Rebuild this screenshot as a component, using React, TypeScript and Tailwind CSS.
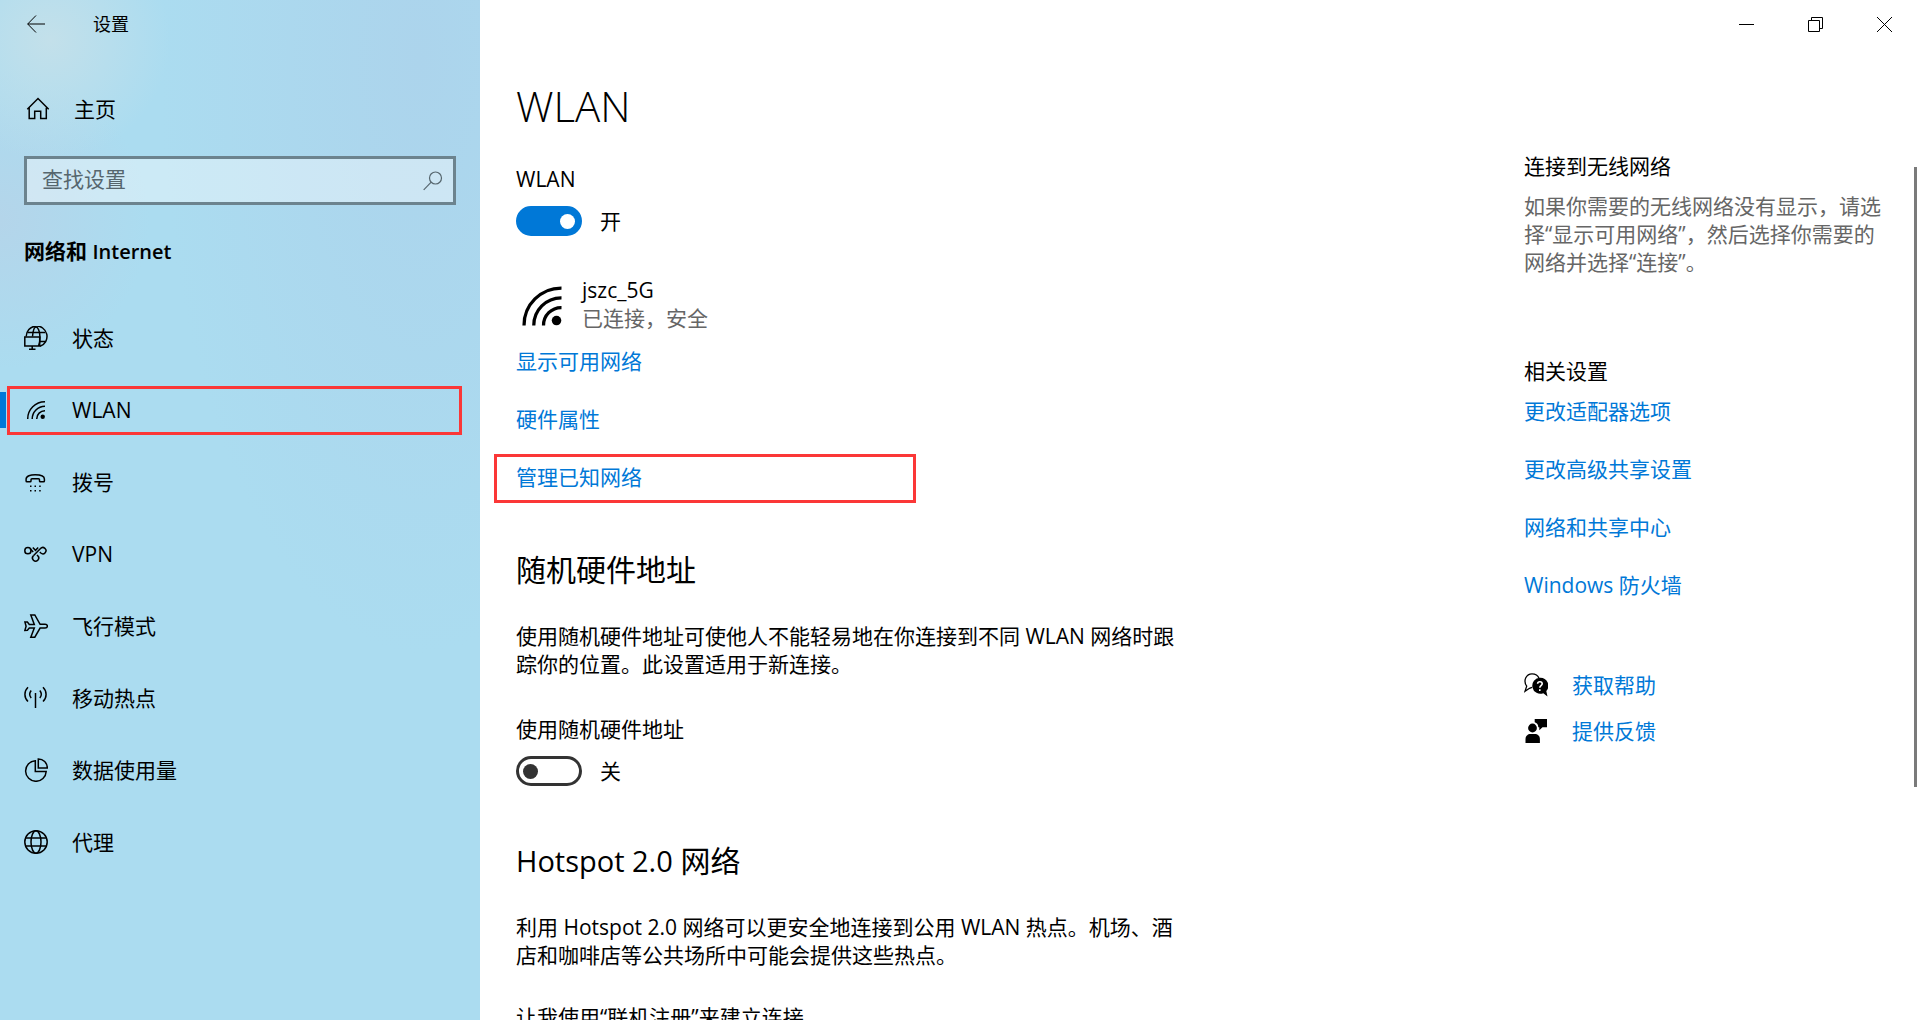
import { useState } from "react";
import type { ReactNode } from "react";

const iconProps = {
  width: 24,
  height: 24,
  viewBox: "0 0 24 24",
  fill: "none",
  stroke: "currentColor",
  strokeWidth: 1.5,
  "aria-hidden": true,
};

const StatusIcon = () => (
  <svg {...iconProps}>
    <path d="M2.200 10.500A10.400 10.400 0 1 1 16 20.300" />
    <path d="M8.500 10.500C9 5 10.300 1 12 1s4 4 4 10.500c0 3-.5 6-1.500 8.500" />
    <path d="M3.500 6.500h17.500M16 15.500h5.500" />
    <path d="M.8 11h14.900v9H.8zM8.200 20v3.200M5 23.200h6.500" />
  </svg>
);

const WlanIcon = ({ size = 24 }: { size?: number }) => (
  <svg {...iconProps} width={size} height={size}>
    <path d="M3.700 21A17.200 17.200 0 0 1 21 3.700" />
    <path d="M8.200 21A12.700 12.700 0 0 1 21 8.200" />
    <path d="M12.700 21A8.200 8.200 0 0 1 21 12.700" />
    <circle cx="18.700" cy="18.700" r="2.200" fill="currentColor" stroke="none" />
  </svg>
);

const DialIcon = () => (
  <svg {...iconProps}>
    <path d="M3 11.800h3.200c.5 0 .8-.3.800-.8V9.700c0-.6.400-1 1-1h6.500c.6 0 1 .4 1 1V11c0 .5.300.8.800.8h3.200c.6 0 .9-.3.9-.9V9c0-3-4.500-4.300-9.200-4.300S2.100 6 2.100 9v1.900c0 .6.300.9.900.9z" />
    <path d="M6 16.200h1.500M10.500 16.200H12M15.200 16.200h1.500M6 20.700h1.500M10.500 20.700H12M15.200 20.700h1.500" />
  </svg>
);

const VpnIcon = () => (
  <svg {...iconProps}>
    <circle cx="3.900" cy="8.700" r="3.100" />
    <path d="M6 6.400l3.200 3.600M8.800 5.500l2.700 2.800 2.700-2.800" />
    <path d="M9.400 13.800l7.100-7.200a3.100 3.100 0 1 1 .3 4.400l-1-1" />
    <path d="M9.400 13.800a3.100 3.100 0 1 0 4.400 0l-.8-.9" />
  </svg>
);

const PlaneIcon = () => (
  <svg {...iconProps}>
    <path d="M.9 8l2.500.1 1.900 2.300h5L6.800.9h4l5.300 9.400h5c3 0 3 3.800 0 3.800h-5l-5.300 9.100h-4l3.500-9.100h-5l-1.900 2.200-2.500.1 1.200-4.200z" />
  </svg>
);

const HotspotIcon = () => (
  <svg {...iconProps}>
    <path d="M11.500 7v15" />
    <path d="M7.200 4.500c-1.900 2.300-1.900 5.200 0 7.500M15.800 4.500c1.900 2.300 1.900 5.200 0 7.500" />
    <path d="M4 1.300C-.1 5.300-.1 11.500 4 15.500M19 1.300c4.100 4 4.100 10.200 0 14.200" />
  </svg>
);

const DataIcon = () => (
  <svg {...iconProps}>
    <path d="M11.300 2.700a10.300 10.300 0 1 0 10.900 10.800H11.300z" />
    <path d="M14.300.9v9h9A9 9 0 0 0 14.300.9z" />
  </svg>
);

const GlobeIcon = () => (
  <svg {...iconProps}>
    <circle cx="12" cy="12" r="11.200" />
    <ellipse cx="12" cy="12" rx="5" ry="11.200" />
    <path d="M2 8h20M2 16h20" />
  </svg>
);

const HelpIcon = () => (
  <svg {...iconProps}>
    <path d="M8 14.300l-2.500 1-4.500 3 1.700-5.200C-1.300 7.300 2.500.9 8 .9c3.700 0 6 1.700 7 4.300" strokeWidth="1.300" />
    <path
      d="M16 4.800a8 8 0 1 0 3.300 15.400l4.200 3.300-1.200-5.400A8 8 0 0 0 16 4.800z"
      fill="currentColor"
      stroke="none"
    />
    <path d="M13.600 10.700c.2-2.700 4.600-2.500 4.600.1 0 1.900-2.400 1.900-2.400 3.900M15.800 16.200v1.700" stroke="#fff" strokeWidth="1.600" />
  </svg>
);

const FeedbackIcon = () => (
  <svg {...iconProps} fill="currentColor" stroke="none">
    <circle cx="8.500" cy="9" r="4.400" />
    <path d="M1.500 24v-4c0-3 2.300-5 5-5h4.200c3 0 5.200 2 5.200 5v4z" />
    <path d="M10.700 0H23v8.200h-4.500l-3.200 3V8.200h-1c0-2.600-1.300-4.300-3.600-5z" />
  </svg>
);

const navItems = [
  { label: "状态", icon: <StatusIcon /> },
  { label: "WLAN", icon: <WlanIcon />, active: true },
  { label: "拨号", icon: <DialIcon /> },
  { label: "VPN", icon: <VpnIcon /> },
  { label: "飞行模式", icon: <PlaneIcon /> },
  { label: "移动热点", icon: <HotspotIcon /> },
  { label: "数据使用量", icon: <DataIcon /> },
  { label: "代理", icon: <GlobeIcon /> },
];

const relatedLinks = ["更改适配器选项", "更改高级共享设置", "网络和共享中心", "Windows 防火墙"];

function TextLink({ children }: { children: ReactNode }) {
  return (
    <a href="#" className="block w-fit text-[#0078d7] hover:text-[#666]">
      {children}
    </a>
  );
}

function Toggle({ id, label, initial }: { id: string; label: string; initial: boolean }) {
  const [on, setOn] = useState(initial);

  return (
    <div>
      <label htmlFor={id} className="block">
        {label}
      </label>
      <div className="mt-[13px] flex h-[30px] items-center gap-[18px]">
        <input
          id={id}
          type="checkbox"
          role="switch"
          checked={on}
          onChange={(e) => setOn(e.target.checked)}
          className="flex h-[30px] w-[66px] appearance-none items-center rounded-full border-3 border-[#333] px-1 before:size-[15px] before:rounded-full before:bg-[#333] before:content-[''] checked:justify-end checked:border-[#0078d7] checked:bg-[#0078d7] checked:before:bg-white"
        />
        <span>{on ? "开" : "关"}</span>
      </div>
    </div>
  );
}

function Sidebar() {
  return (
    <nav className="flex w-1/4 shrink-0 flex-col bg-[#abdcf0] bg-[radial-gradient(circle_at_50px_40px,#c3e0ea_0,transparent_120px),radial-gradient(circle_at_0px_220px,#b4d5ea_0,transparent_150px),radial-gradient(ellipse_at_420px_60px,#acd4ec_0,transparent_260px)]">
      <div className="flex h-12 items-center gap-12 pl-[27px]">
        <button type="button" aria-label="返回">
          <svg width="18" height="18" viewBox="0 0 18 18" fill="none" stroke="currentColor" aria-hidden="true">
            <path d="M9 .5L.7 9 9 17.500M.7 9H18" />
          </svg>
        </button>
        <span className="text-lg">设置</span>
      </div>

      <a href="#" className="mt-[47px] flex h-7 items-center gap-6 pl-[26px]">
        <svg {...iconProps}>
          <path d="M1.300 12.300L12 1.500l10.700 10.800M3.200 10.700v10.800h5.500v-7.200h6v7.200h5.600V10.700" />
        </svg>
        主页
      </a>

      <div className="mx-6 mt-[33px] flex h-[49px] items-center border-3 border-[#6c838e] bg-white/40 pr-2.5 pl-[15px]">
        <input
          type="text"
          aria-label="查找设置"
          placeholder="查找设置"
          className="min-w-0 flex-1 pb-1 outline-none placeholder:text-[#56666e]"
        />
        <svg width="20" height="20" viewBox="0 0 20 20" fill="none" stroke="#56666e" strokeWidth="1.200" aria-hidden="true">
          <circle cx="12.500" cy="7" r="6" />
          <path d="M8.200 11.200L.7 18.800" />
        </svg>
      </div>

      <h2 className="mt-8 px-6 font-semibold">
        网络和 <span className="text-xl">Internet</span>
      </h2>

      <ul className="mt-9">
        {navItems.map((item) => (
          <li key={item.label} className="flex h-[72px] items-center">
            {item.active ? (
              <>
                <span className="mr-px h-9 w-1.5 bg-[#0078d7]" />
                <a
                  href="#"
                  aria-current="page"
                  className="mr-[18px] flex h-[49px] flex-1 items-center gap-6 border-3 border-[#fb3737] pl-3.5"
                >
                  {item.icon}
                  {item.label}
                </a>
              </>
            ) : (
              <a href="#" className="flex flex-1 items-center gap-6 pl-6">
                {item.icon}
                {item.label}
              </a>
            )}
          </li>
        ))}
      </ul>
    </nav>
  );
}

function WindowControls() {
  const buttons = [
    { label: "最小化", d: "M0 7.500h15" },
    { label: "还原", d: "M.5 3.500h11v11H.5zM3.500 3.500v-3h11v11h-3" },
    { label: "关闭", d: "M0 0l15 15M15 0L0 15" },
  ];

  return (
    <header className="flex h-12 shrink-0 justify-end pr-px">
      {buttons.map((button) => (
        <button
          key={button.label}
          type="button"
          aria-label={button.label}
          className="flex w-[69px] items-center justify-center hover:bg-gray-200"
        >
          <svg width="15" height="15" viewBox="0 0 15 15" fill="none" stroke="currentColor" aria-hidden="true">
            <path d={button.d} />
          </svg>
        </button>
      ))}
    </header>
  );
}

export default function App() {
  return (
    <div className="flex h-screen overflow-hidden bg-white font-['Open_Sans','Noto_Sans_CJK_SC',sans-serif] text-[21px] leading-7 text-black">
      <Sidebar />

      <div className="flex min-w-0 flex-1 flex-col">
        <WindowControls />

        <div className="flex min-h-0 flex-1">
          <main className="min-w-0 flex-1 overflow-hidden pt-[30px] pl-9">
            <h1 className="text-[42px] leading-[56px] font-light">WLAN</h1>

            <div className="mt-[31px]">
              <Toggle id="wlan" label="WLAN" initial={true} />
            </div>

            <div className="mt-10 flex items-center">
              <div className="w-[66px] pt-1">
                <WlanIcon size={52} />
              </div>
              <div>
                <p>jszc_5G</p>
                <p className="text-[#666]">已连接，安全</p>
              </div>
            </div>

            <div className="mt-[15px] space-y-[30px]">
              <TextLink>显示可用网络</TextLink>
              <TextLink>硬件属性</TextLink>
            </div>
            <div className="mt-[21px] -ml-[22px] h-[49px] w-[422px] border-3 border-[#fb3737] pt-1.5 pl-[19px]">
              <TextLink>管理已知网络</TextLink>
            </div>

            <h2 className="mt-[47px] text-3xl leading-10">随机硬件地址</h2>
            <p className="mt-8 max-w-[670px]">
              使用随机硬件地址可使他人不能轻易地在你连接到不同 WLAN 网络时跟踪你的位置。此设置适用于新连接。
            </p>
            <div className="mt-[37px]">
              <Toggle id="random-mac" label="使用随机硬件地址" initial={false} />
            </div>

            <h2 className="mt-[55px] text-3xl leading-10">
              <span className="text-[29px]">Hotspot 2.0</span> 网络
            </h2>
            <p className="mt-8 max-w-[670px]">
              利用 Hotspot 2.0 网络可以更安全地连接到公用 WLAN 热点。机场、酒店和咖啡店等公共场所中可能会提供这些热点。
            </p>
            <p className="mt-[34px]">让我使用“联机注册”来建立连接</p>
          </main>

          <aside className="w-[390px] shrink-0 pt-[104px] pr-6">
            <h3>连接到无线网络</h3>
            <p className="mt-3 text-[#666]">
              如果你需要的无线网络没有显示，请选择“显示可用网络”，然后选择你需要的网络并选择“连接”。
            </p>

            <h3 className="mt-[81px]">相关设置</h3>
            <div className="mt-3 space-y-[30px]">
              {relatedLinks.map((link) => (
                <TextLink key={link}>{link}</TextLink>
              ))}
            </div>

            <div className="mt-[72px] space-y-[18px]">
              <div className="flex items-center gap-6">
                <HelpIcon />
                <TextLink>获取帮助</TextLink>
              </div>
              <div className="flex items-center gap-6">
                <FeedbackIcon />
                <TextLink>提供反馈</TextLink>
              </div>
            </div>
          </aside>

          {/* scroll bar thumb */}
          <div className="w-1.5 pt-[119px]">
            <div className="h-[620px] w-[3px] bg-[#7a7a7a]" />
          </div>
        </div>
      </div>
    </div>
  );
}
